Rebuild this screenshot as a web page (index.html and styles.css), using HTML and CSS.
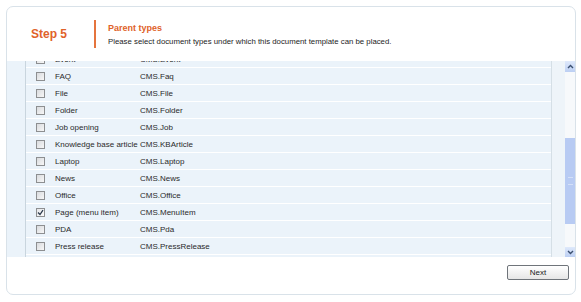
FILE: index.html
```html
<!DOCTYPE html>
<html lang="en">
<head>
  <meta charset="UTF-8">
  <title>Parent types</title>
  <link rel="stylesheet" href="styles.css">
</head>
<body>
  <div class="card">
    <div class="header">
      <div class="step">Step 5</div>
      <div class="divider"></div>
      <div class="titles">
        <div class="title">Parent types</div>
        <div class="subtitle">Please select document types under which this document template can be placed.</div>
      </div>
    </div>

    <div class="list">
      <div class="gutter"></div>
      <div class="rows">
        <div class="rows-inner">
          <div class="row"><span class="check"></span><span>Event</span><span>CMS.Event</span></div>
          <div class="row"><span class="check"></span><span>FAQ</span><span>CMS.Faq</span></div>
          <div class="row"><span class="check"></span><span>File</span><span>CMS.File</span></div>
          <div class="row"><span class="check"></span><span>Folder</span><span>CMS.Folder</span></div>
          <div class="row"><span class="check"></span><span>Job opening</span><span>CMS.Job</span></div>
          <div class="row"><span class="check"></span><span>Knowledge base article</span><span>CMS.KBArticle</span></div>
          <div class="row"><span class="check"></span><span>Laptop</span><span>CMS.Laptop</span></div>
          <div class="row"><span class="check"></span><span>News</span><span>CMS.News</span></div>
          <div class="row"><span class="check"></span><span>Office</span><span>CMS.Office</span></div>
          <div class="row"><span class="check checked"><svg width="7" height="7" viewBox="0 0 7 7"><path d="M1 3.5 L3 5.5 L6 1.2" fill="none" stroke="#2d3b4d" stroke-width="1.3"/></svg></span><span>Page (menu item)</span><span>CMS.MenuItem</span></div>
          <div class="row"><span class="check"></span><span>PDA</span><span>CMS.Pda</span></div>
          <div class="row"><span class="check"></span><span>Press release</span><span>CMS.PressRelease</span></div>
        </div>
      </div>
      <div class="scroll-gap"></div>
      <div class="scrollbar">
        <div class="scroll-btn"><svg width="7" height="5" viewBox="0 0 7 5"><path d="M1 4 L3.5 1.5 L6 4" fill="none" stroke="#3b4f70" stroke-width="1.4"/></svg></div>
        <div class="track-top"></div>
        <div class="thumb"><span class="grip"></span></div>
        <div class="track-bottom"></div>
        <div class="scroll-btn"><svg width="7" height="5" viewBox="0 0 7 5"><path d="M1 1 L3.5 3.5 L6 1" fill="none" stroke="#3b4f70" stroke-width="1.4"/></svg></div>
      </div>
    </div>

    <div class="footer">
      <button class="next">Next</button>
    </div>
  </div>
</body>
</html>
```

FILE: styles.css
```css
body {
  margin: 0;
  padding: 6px;
  background: white;
  font-family: "Liberation Sans", Arial, sans-serif;
}
.card {
  box-sizing: border-box;
  width: 570px;
  height: 289px;
  border: 1px solid #d9e2e9;
  border-radius: 7px;
  overflow: hidden;
  display: flex;
  flex-direction: column;
}
.header {
  height: 54px;
  display: flex;
  align-items: center;
  padding-left: 24px;
  flex-shrink: 0;
}
.step {
  color: #e0622a;
  font-size: 12px;
  font-weight: bold;
  width: 63px;
}
.divider {
  width: 2px;
  height: 28px;
  background: #e5743d;
  margin-right: 12px;
}
.title {
  color: #e0622a;
  font-size: 9px;
  font-weight: bold;
  margin-bottom: 4px;
}
.subtitle {
  color: #1c1c1c;
  font-size: 7.8px;
}
.list {
  height: 196px;
  display: flex;
  flex-shrink: 0;
  background: #ebf3fa;
}
.gutter {
  width: 18px;
  border-right: 1px solid #c9d5de;
}
.rows {
  width: 525px;
  border-right: 1px solid #d5dfe6;
  overflow: hidden;
}
.rows-inner {
  margin-top: -10px;
}
.row {
  display: grid;
  grid-template-columns: 29px 85px 1fr;
  align-items: center;
  height: 16px;
  border-bottom: 1px solid white;
  font-size: 8px;
  color: #2a2a2a;
}
.check {
  box-sizing: border-box;
  width: 9px;
  height: 9px;
  margin-left: 10px;
  border: 1px solid #8d8f91;
  background: linear-gradient(135deg, #d9dbde, #f7f7f7);
  display: flex;
  align-items: center;
  justify-content: center;
}
.checked {
  background: linear-gradient(135deg, #e4e6e9, #fbfbfb);
}
.scroll-gap {
  width: 13px;
  background: #eef4f9;
}
.scrollbar {
  width: 10px;
  display: flex;
  flex-direction: column;
  background: #f7f9fb;
}
.scroll-btn {
  height: 10px;
  background: linear-gradient(#dfe9fb, #bccff3);
  display: flex;
  align-items: center;
  justify-content: center;
}
.scrollbar .scroll-btn:first-child {
  height: 11px;
}
.track-top {
  height: 66px;
}
.thumb {
  height: 86px;
  background: #b8cbf3;
  display: flex;
  align-items: center;
  justify-content: center;
}
.grip {
  width: 5px;
  height: 6px;
  border-top: 1px solid #d4e0f8;
  border-bottom: 1px solid #d4e0f8;
}
.track-bottom {
  height: 23px;
}
.footer {
  flex: 1;
  display: flex;
  justify-content: flex-end;
  align-items: flex-start;
  padding: 8px 6px 0 0;
}
.next {
  width: 62px;
  height: 15px;
  padding: 0;
  border: 1px solid #6f747a;
  border-radius: 2px;
  background: linear-gradient(#ffffff, #e6e6e6);
  font-family: "Liberation Sans", Arial, sans-serif;
  font-size: 8px;
  color: #1a1a1a;
}
```
